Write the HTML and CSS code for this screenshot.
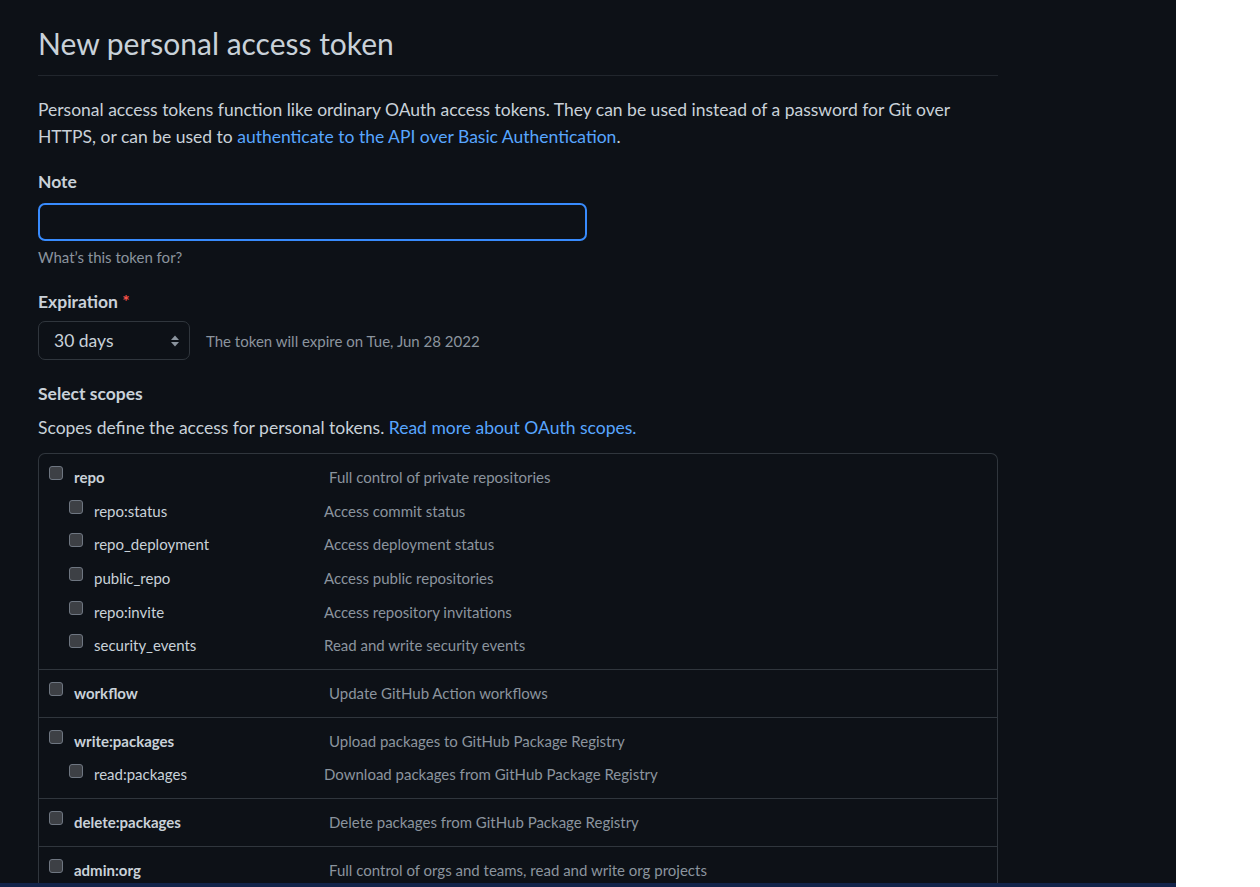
FILE: index.html
```html
<!DOCTYPE html>
<html lang="en">
<head>
<meta charset="utf-8">
<title>New personal access token</title>
<link rel="stylesheet" href="styles.css">
</head>
<body>
<div class="page">
  <main class="content">
    <div class="subhead">
      <h1 class="subhead-heading">New personal access token</h1>
    </div>
    <p class="intro">Personal access tokens function like ordinary OAuth access tokens. They can be used instead of a password for Git over HTTPS, or can be used to <a href="#">authenticate to the API over Basic Authentication</a>.</p>

    <form class="token-form">
      <div class="form-group">
        <label class="form-label" for="note">Note</label>
        <input class="form-input focused" id="note" type="text">
        <p class="note">What’s this token for?</p>
      </div>

      <div class="form-group">
        <label class="form-label" for="exp">Expiration <span class="required">*</span></label>
        <div class="expiry-row">
          <div class="select-box" id="exp">
            <span>30 days</span>
            <svg class="select-arrows" width="10" height="14" viewBox="0 0 10 14"><path d="M1 6 L5 1.5 L9 6 Z" fill="#8b949e"/><path d="M1 8 L5 12.5 L9 8 Z" fill="#8b949e"/></svg>
          </div>
          <span class="expiry-note">The token will expire on Tue, Jun 28 2022</span>
        </div>
      </div>

      <div class="form-group scopes-group">
        <h2 class="form-label">Select scopes</h2>
        <p class="scopes-desc">Scopes define the access for personal tokens. <a href="#">Read more about OAuth scopes.</a></p>

        <div class="scopes">
          <div class="scope-group">
            <div class="scope-row top"><input type="checkbox" class="cb"><span class="scope-name">repo</span><span class="scope-desc">Full control of private repositories</span></div>
            <div class="scope-row sub"><input type="checkbox" class="cb"><span class="scope-name">repo:status</span><span class="scope-desc">Access commit status</span></div>
            <div class="scope-row sub"><input type="checkbox" class="cb"><span class="scope-name">repo_deployment</span><span class="scope-desc">Access deployment status</span></div>
            <div class="scope-row sub"><input type="checkbox" class="cb"><span class="scope-name">public_repo</span><span class="scope-desc">Access public repositories</span></div>
            <div class="scope-row sub"><input type="checkbox" class="cb"><span class="scope-name">repo:invite</span><span class="scope-desc">Access repository invitations</span></div>
            <div class="scope-row sub"><input type="checkbox" class="cb"><span class="scope-name">security_events</span><span class="scope-desc">Read and write security events</span></div>
          </div>
          <div class="scope-group">
            <div class="scope-row top"><input type="checkbox" class="cb"><span class="scope-name">workflow</span><span class="scope-desc">Update GitHub Action workflows</span></div>
          </div>
          <div class="scope-group">
            <div class="scope-row top"><input type="checkbox" class="cb"><span class="scope-name">write:packages</span><span class="scope-desc">Upload packages to GitHub Package Registry</span></div>
            <div class="scope-row sub"><input type="checkbox" class="cb"><span class="scope-name">read:packages</span><span class="scope-desc">Download packages from GitHub Package Registry</span></div>
          </div>
          <div class="scope-group">
            <div class="scope-row top"><input type="checkbox" class="cb"><span class="scope-name">delete:packages</span><span class="scope-desc">Delete packages from GitHub Package Registry</span></div>
          </div>
          <div class="scope-group">
            <div class="scope-row top"><input type="checkbox" class="cb"><span class="scope-name">admin:org</span><span class="scope-desc">Full control of orgs and teams, read and write org projects</span></div>
          </div>
        </div>
      </div>
    </form>
  </main>
  <div class="bottom-strip"></div>
</div>
</body>
</html>
```

FILE: styles.css
```css
* { box-sizing: border-box; }

html, body {
  margin: 0;
  padding: 0;
  background: #ffffff;
  height: 887px;
  overflow: hidden;
}

body {
  font-family: Lato, "Noto Sans", "Liberation Sans", sans-serif;
  color: #c9d1d9;
}

.page {
  width: 1176px;
  height: 887px;
  background: #0d1117;
  display: flex;
  flex-direction: column;
}

.content {
  flex: 1;
  overflow: hidden;
  padding: 0 178px 0 38px;
}

.bottom-strip {
  height: 4px;
  background: #12244a;
}

a {
  color: #58a6ff;
  text-decoration: none;
}

.subhead {
  border-bottom: 1px solid #21262d;
  padding-top: 24px;
  padding-bottom: 13px;
}

.subhead-heading {
  margin: 0;
  font-size: 30px;
  font-weight: 400;
  line-height: 38px;
  color: #c9d1d9;
}

.intro {
  margin: 20px 0 0;
  font-size: 17.5px;
  line-height: 27px;
}

.token-form {
  margin: 0;
  display: flex;
  flex-direction: column;
}

.form-group {
  margin-top: 19px;
}

.form-label {
  display: block;
  margin: 0;
  font-size: 17.5px;
  line-height: 26px;
  font-weight: 700;
  color: #c9d1d9;
}

.required {
  color: #f85149;
  font-weight: 700;
}

.form-input {
  display: block;
  margin-top: 8px;
  width: 549px;
  height: 38px;
  background: #0d1117;
  border: 1px solid #30363d;
  border-radius: 7px;
  color: #c9d1d9;
  font: inherit;
  outline: none;
}

.form-input.focused {
  border: 2px solid #388bfd;
}

.note {
  margin: 5px 0 2px;
  font-size: 15px;
  line-height: 22px;
  color: #8b949e;
}

.expiry-row {
  margin-top: 6px;
  display: flex;
  align-items: center;
  gap: 16px;
}

.select-box {
  width: 152px;
  height: 39px;
  border: 1px solid #30363d;
  border-radius: 7px;
  display: flex;
  align-items: center;
  justify-content: space-between;
  padding: 0 9px 0 15px;
  font-size: 17.5px;
  color: #c9d1d9;
}

.select-arrows {
  display: block;
}

.expiry-note {
  font-size: 15px;
  color: #8b949e;
}

.scopes-group {
  margin-top: 21px;
}

.scopes-desc {
  margin: 8px 0 0;
  font-size: 17.5px;
  line-height: 26px;
}

.scopes {
  margin-top: 12px;
  border: 1px solid #30363d;
  border-bottom: none;
  border-radius: 7px 7px 0 0;
}

.scope-group {
  padding: 6px 0 7px;
  border-bottom: 1px solid #30363d;
}

.scope-row {
  display: flex;
  align-items: center;
  height: 33.7px;
  font-size: 15px;
}

.scope-row.top { padding-left: 10px; }
.scope-row.sub { padding-left: 30px; }

.cb {
  appearance: none;
  -webkit-appearance: none;
  margin: 0 11px 0 0;
  width: 14px;
  height: 14px;
  align-self: flex-start;
  margin-top: 6px;
  background: #3d4045;
  border: 1px solid #6e7681;
  border-radius: 3px;
  flex: none;
}

.scope-name {
  color: #c9d1d9;
  flex: none;
}

.scope-row.top .scope-name {
  width: 255px;
  font-weight: 700;
}

.scope-row.sub .scope-name {
  width: 230px;
}

.scope-desc {
  color: #8b949e;
}
```
